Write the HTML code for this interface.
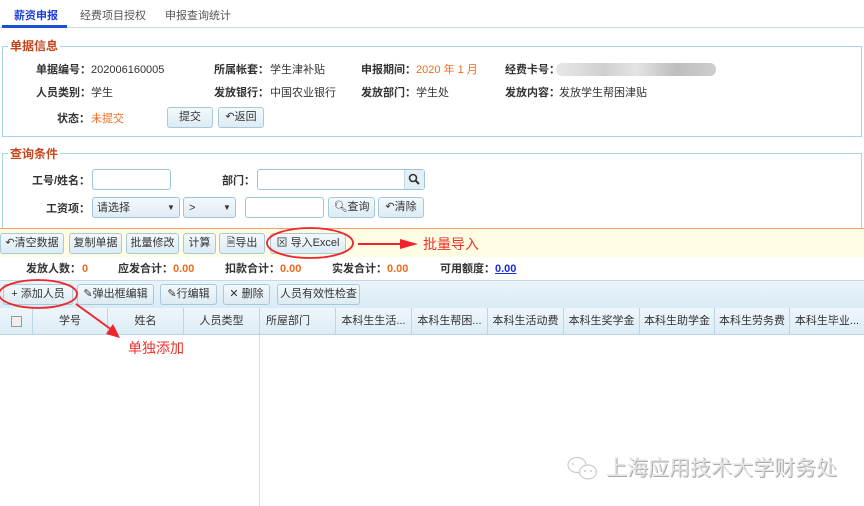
<!DOCTYPE html>
<html><head><meta charset="utf-8"><style>
*{margin:0;padding:0;box-sizing:border-box}
body{width:864px;height:506px;overflow:hidden;background:#fff;font-family:"Liberation Sans","Noto Sans CJK SC",sans-serif;font-size:11px;color:#333;position:relative}
.a{position:absolute;white-space:nowrap;line-height:14px}
.b{font-weight:bold;color:#333}
.or{color:#f06a1e}
.fs{position:absolute;border:1px solid #a9d3ea;background:#fff}
.lg{position:absolute;background:#fff;color:#c4461c;font-weight:bold;font-size:12px;padding:0 2px;line-height:16px}
.btn{position:absolute;border:1px solid #a8c8dc;border-radius:3px;background:linear-gradient(#f3f9fc,#dcebf4);height:21px;line-height:19px;text-align:center;font-size:11px;color:#333}
.inp{position:absolute;border:1px solid #9cc4dc;border-radius:3px;background:#fff;height:21px}
.th{position:absolute;top:308px;height:27px;line-height:27px;border-right:1px solid #b9d6e8;text-align:center;font-size:11px}
</style></head><body>
<!-- tabs -->
<div class="a" style="left:0;top:0;width:864px;height:28px;border-bottom:1px solid #c9dbe8"></div>
<div class="a" style="left:14px;top:9px;color:#1b3fd8;font-weight:bold">薪资申报</div>
<div class="a" style="left:2px;top:25px;width:65px;height:3px;background:#1b4fd8"></div>
<div class="a" style="left:80px;top:9px;color:#555">经费项目授权</div>
<div class="a" style="left:165px;top:9px;color:#555">申报查询统计</div>

<!-- fieldset 1 -->
<div class="fs" style="left:2px;top:46px;width:860px;height:91px"></div>
<div class="lg" style="left:8px;top:38px">单据信息</div>
<div class="a b" style="left:36px;top:63px">单据编号：</div><div class="a" style="left:91px;top:63px">202006160005</div>
<div class="a b" style="left:214px;top:63px">所属帐套：</div><div class="a" style="left:270px;top:63px">学生津补贴</div>
<div class="a b" style="left:361px;top:63px">申报期间：</div><div class="a or" style="left:416px;top:63px">2020 年 1 月</div>
<div class="a b" style="left:505px;top:63px">经费卡号：</div>
<div class="a" style="left:556px;top:63px;width:160px;height:13px;border-radius:6px;background:linear-gradient(90deg,#e8e8e8,#d0d0d0 30%,#e4e4e4 50%,#bdbdbd 75%,#cfcfcf)"></div>
<div class="a b" style="left:36px;top:86px">人员类别：</div><div class="a" style="left:91px;top:86px">学生</div>
<div class="a b" style="left:214px;top:86px">发放银行：</div><div class="a" style="left:270px;top:86px">中国农业银行</div>
<div class="a b" style="left:361px;top:86px">发放部门：</div><div class="a" style="left:416px;top:86px">学生处</div>
<div class="a b" style="left:505px;top:86px">发放内容：</div><div class="a" style="left:559px;top:86px">发放学生帮困津贴</div>
<div class="a b" style="left:57px;top:112px">状态：</div><div class="a or" style="left:91px;top:112px">未提交</div>
<div class="btn" style="left:167px;top:107px;width:46px">提交</div>
<div class="btn" style="left:218px;top:107px;width:46px">&#x21B6;返回</div>

<!-- fieldset 2 -->
<div class="fs" style="left:2px;top:153px;width:860px;height:76px"></div>
<div class="lg" style="left:8px;top:146px">查询条件</div>
<div class="a b" style="left:32px;top:174px">工号/姓名：</div>
<div class="inp" style="left:92px;top:169px;width:79px"></div>
<div class="a b" style="left:222px;top:174px">部门：</div>
<div class="inp" style="left:257px;top:169px;width:168px"></div>
<div class="a" style="left:404px;top:170px;width:20px;height:19px;background:#e3eff7;border-left:1px solid #c0d8e8"></div>
<svg class="a" style="left:408px;top:173px" width="12" height="12"><circle cx="5" cy="5" r="3.5" stroke="#333" stroke-width="1.6" fill="none"/><path d="M7.5 7.5L11 11" stroke="#333" stroke-width="2"/></svg>
<div class="a b" style="left:46px;top:202px">工资项：</div>
<div class="inp" style="left:92px;top:197px;width:88px;background:linear-gradient(#f4f9fc,#dfecf5)"><span class="a" style="left:4px;top:3px">请选择</span><span class="a" style="left:74px;top:3px;font-size:8px">▼</span></div>
<div class="inp" style="left:183px;top:197px;width:53px;background:linear-gradient(#f4f9fc,#dfecf5)"><span class="a" style="left:5px;top:3px">&gt;</span><span class="a" style="left:39px;top:3px;font-size:8px">▼</span></div>
<div class="inp" style="left:245px;top:197px;width:79px"></div>
<div class="btn" style="left:328px;top:197px;width:47px">&#x1F50D;&#xFE0E;查询</div>
<div class="btn" style="left:378px;top:197px;width:46px">&#x21B6;清除</div>

<!-- yellow toolbar -->
<div class="a" style="left:0;top:228px;width:864px;height:29px;background:#fefde4;border-top:1px solid #f0a070"></div>
<div class="btn" style="left:0;top:233px;width:64px">&#x21B6;清空数据</div>
<div class="btn" style="left:69px;top:233px;width:53px">复制单据</div>
<div class="btn" style="left:126px;top:233px;width:53px">批量修改</div>
<div class="btn" style="left:183px;top:233px;width:33px">计算</div>
<div class="btn" style="left:219px;top:233px;width:46px">&#x1F5CE;导出</div>
<div class="btn" style="left:270px;top:233px;width:76px">&#x22A0; 导入Excel</div>
<div class="a" style="left:423px;top:236px;color:#f0302a;font-size:14px;line-height:16px">批量导入</div>

<!-- stats -->
<div class="a b" style="left:26px;top:262px">发放人数：</div><div class="a or b" style="left:82px;top:262px">0</div>
<div class="a b" style="left:118px;top:262px">应发合计：</div><div class="a or b" style="left:173px;top:262px">0.00</div>
<div class="a b" style="left:225px;top:262px">扣款合计：</div><div class="a or b" style="left:280px;top:262px">0.00</div>
<div class="a b" style="left:332px;top:262px">实发合计：</div><div class="a or b" style="left:387px;top:262px">0.00</div>
<div class="a b" style="left:440px;top:262px">可用额度：</div><div class="a b" style="left:495px;top:262px;color:#1a2ee0;text-decoration:underline">0.00</div>

<!-- toolbar 2 -->
<div class="a" style="left:0;top:280px;width:864px;height:28px;background:linear-gradient(#eaf4fa,#d9ebf5);border-top:1px solid #c0dbea"></div>
<div class="btn" style="left:3px;top:284px;width:70px">+ 添加人员</div>
<div class="btn" style="left:77px;top:284px;width:77px">&#x270E;弹出框编辑</div>
<div class="btn" style="left:160px;top:284px;width:57px">&#x270E;行编辑</div>
<div class="btn" style="left:223px;top:284px;width:47px">✕ 删除</div>
<div class="btn" style="left:277px;top:284px;width:83px">人员有效性检查</div>

<!-- header -->
<div class="a" style="left:0;top:308px;width:864px;height:27px;background:linear-gradient(#eef6fb,#dcecf6);border-bottom:1px solid #b9d6e8"></div>
<div class="th" style="left:0;width:33px"><span style="display:inline-block;width:11px;height:11px;border:1px solid #999;background:#eee;vertical-align:middle"></span></div>
<div class="th" style="left:33px;width:75px">学号</div>
<div class="th" style="left:108px;width:76px">姓名</div>
<div class="th" style="left:184px;width:76px">人员类型</div>
<div class="th" style="left:260px;width:76px;text-align:left;padding-left:6px">所屋部门</div>
<div class="th" style="left:336px;width:76px">本科生生活...</div>
<div class="th" style="left:412px;width:76px">本科生帮困...</div>
<div class="th" style="left:488px;width:76px">本科生活动费</div>
<div class="th" style="left:564px;width:76px">本科生奖学金</div>
<div class="th" style="left:640px;width:75px">本科生助学金</div>
<div class="th" style="left:715px;width:75px">本科生劳务费</div>
<div class="th" style="left:790px;width:74px;border-right:0">本科生毕业...</div>
<div class="a" style="left:259px;top:335px;width:1px;height:171px;background:#c9dff0"></div>
<div class="a" style="left:128px;top:340px;color:#f0302a;font-size:14px;line-height:16px">单独添加</div>

<svg class="a" style="left:0;top:0" width="864" height="506">
<ellipse cx="310" cy="243" rx="43" ry="15" fill="none" stroke="#f0242a" stroke-width="1.8"/>
<path d="M358 244L402 244" stroke="#f0242a" stroke-width="2"/><path d="M400 239L418 244L400 249Z" fill="#f0242a"/>
<ellipse cx="38" cy="294" rx="39" ry="14" fill="none" stroke="#f0242a" stroke-width="1.8"/>
<path d="M76 304L112 330" stroke="#f0242a" stroke-width="2"/><path d="M106 334L120 338L113 324Z" fill="#f0242a"/>
</svg>

<!-- watermark -->
<svg class="a" style="left:565px;top:455px" width="36" height="28"><ellipse cx="12" cy="10" rx="9" ry="7.5" fill="none" stroke="#ccc" stroke-width="1.2"/><ellipse cx="23" cy="17" rx="8.5" ry="7" fill="#fff" stroke="#ccc" stroke-width="1.2"/><circle cx="8" cy="9" r="1" fill="#ccc"/><circle cx="20" cy="16" r="1" fill="#ccc"/><circle cx="26" cy="16" r="1" fill="#ccc"/></svg>
<div class="a" style="left:606px;top:457px;font-size:21px;line-height:24px;color:#e4e4e4;text-shadow:1px 1px 0 #aaa">上海应用技术大学财务处</div>
</body></html>
